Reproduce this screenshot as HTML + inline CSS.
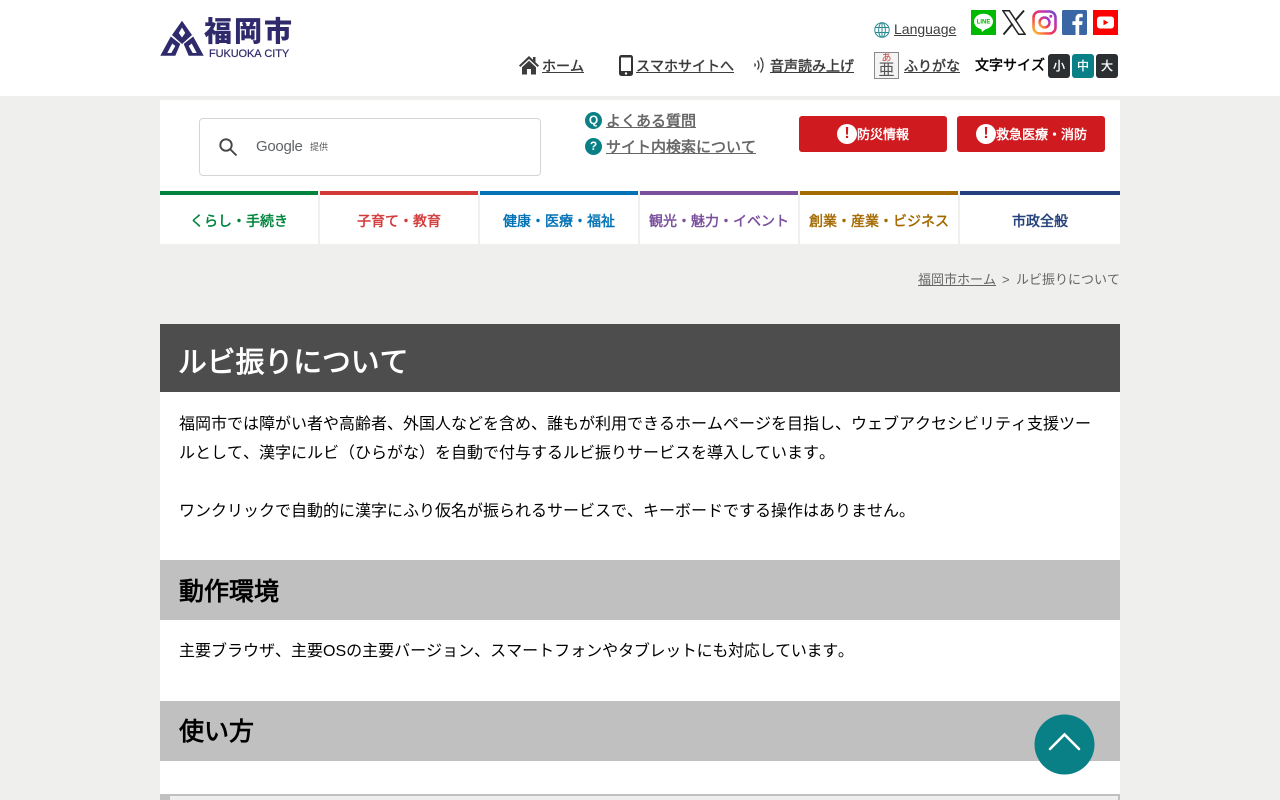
<!DOCTYPE html>
<html lang="ja">
<head>
<meta charset="utf-8">
<title>ルビ振りについて</title>
<style>
html,body{margin:0;padding:0}
body{width:1280px;height:800px;overflow:hidden;position:relative;background:#efefed;font-family:"Liberation Sans","Noto Sans CJK JP",sans-serif;font-kerning:none;color:#000}
.a{position:absolute;white-space:nowrap}
.b{position:absolute}
a{color:inherit}
.hl{font-size:14px;-webkit-text-stroke:.45px;color:#3c3c3c;text-decoration:underline;line-height:20px}
.nav{position:absolute;top:191px;width:158px;height:53px;background:#fff;border-top:4px solid;box-sizing:border-box;text-align:center;font-size:14px;-webkit-text-stroke:.45px;line-height:52px;white-space:nowrap}
.sz{position:absolute;top:54px;width:22px;height:24px;border-radius:3px;background:#2b2f31;color:#fff;font-size:12px;-webkit-text-stroke:.35px;text-align:center;line-height:24px}
.red{position:absolute;top:116px;height:36px;background:#cf1b1f;border-radius:3px;color:#fff;font-size:13px;-webkit-text-stroke:.45px;line-height:38px}
.ex{position:absolute;top:8px;width:20px;height:20px;border-radius:50%;background:#fff;color:#cf1b1f;font-size:16px;font-weight:bold;-webkit-text-stroke:0;line-height:20px;text-align:center}
.q{position:absolute;left:585px;width:17px;height:17px;border-radius:50%;background:#088086;color:#fff;font-size:12px;font-weight:bold;text-align:center;line-height:17px}
.ql{font-size:15px;-webkit-text-stroke:.5px;color:#666;text-decoration:underline;line-height:20px}
</style>
</head>
<body>
<div class="b" style="left:0;top:0;width:1280px;height:96px;background:#fff"></div>

<svg class="b" style="left:160px;top:20px" width="44" height="37" viewBox="0 0 43.400 37">
<path fill="#2e2a6b" fill-rule="evenodd" d="M21.700.7L31.700 15 21.700 24 11.700 15ZM21.700 7.500L18.500 13 21.700 17.500 24.900 13ZM0 35.700L10.500 16.500 20 24 15 35.700ZM7 33H11L15 26 12 23.500ZM43.400 35.700L32.900 16.500 23.400 24 28.400 35.700ZM36.400 33H32.400L28.400 26 31.400 23.500Z"/>
</svg>
<div class="a" style="left:204px;top:11px;font-family:'Noto Sans CJK JP',sans-serif;font-size:28px;font-weight:900;color:#2e2a6b;line-height:38px;letter-spacing:2px">福岡市</div>
<div class="a" style="left:209px;top:47px;font-size:11px;letter-spacing:-.1px;color:#2e2a6b;line-height:14px;-webkit-text-stroke:.2px #2e2a6b">FUKUOKA CITY</div>

<svg class="b" style="left:874px;top:22px" width="16" height="16" viewBox="0 0 16 16" fill="none" stroke="#2b8b92" stroke-width="1"><circle cx="8" cy="8" r="7.200"/><ellipse cx="8" cy="8" rx="3.400" ry="7.200"/><path d="M8 .8V15.200M1 5.500H15M1 10.500H15"/></svg>
<div class="a" style="left:894px;top:19px;font-size:14px;color:#3c3c3c;text-decoration:underline;line-height:20px">Language</div>

<svg class="b" style="left:971px;top:10px" width="25" height="25" viewBox="0 0 25 25"><rect width="25" height="25" fill="#00b900"/><ellipse cx="12.500" cy="11.500" rx="9.500" ry="7.800" fill="#fff"/><path d="M10 18l1 4 5-4z" fill="#fff"/><text x="12.500" y="13.600" font-size="6" font-weight="bold" fill="#00b900" text-anchor="middle" font-family="Liberation Sans">LINE</text></svg>
<svg class="b" style="left:1002px;top:10px" width="24" height="25" viewBox="0 0 24 25"><path d="M1 .8H7.400L23 24.200H16.600Z" fill="#fff" stroke="#222" stroke-width="1.500"/><path d="M22 .5L13.200 10.600M10.600 13.600L1.500 24.500" fill="none" stroke="#222" stroke-width="1.900"/></svg>
<svg class="b" style="left:1032px;top:10px" width="25" height="25" viewBox="0 0 25 25"><defs><linearGradient id="ig" x1="0" y1="1" x2="1" y2="0"><stop offset="0" stop-color="#fdc830"/><stop offset=".4" stop-color="#f0384f"/><stop offset=".75" stop-color="#c22fb0"/><stop offset="1" stop-color="#5b53d8"/></linearGradient></defs><rect x="1.500" y="1.500" width="22" height="22" rx="6" fill="none" stroke="url(#ig)" stroke-width="2.600"/><circle cx="12.500" cy="12.500" r="5" fill="none" stroke="url(#ig)" stroke-width="2.400"/><circle cx="18.800" cy="6.200" r="1.500" fill="#c22fb0"/></svg>
<svg class="b" style="left:1062px;top:10px" width="25" height="25" viewBox="0 0 25 25"><rect width="25" height="25" rx="1.500" fill="#3b66a5"/><path d="M13.500 25V15H10.400V11.200H13.500V8.500C13.500 5.400 15.400 3.800 18.100 3.800C19.400 3.800 20.400 3.900 20.700 4V7.300H18.800C17.300 7.300 17.200 8 17.200 9V11.200H20.600L20.100 15H17.200V25Z" fill="#fff"/></svg>
<svg class="b" style="left:1093px;top:10px" width="25" height="25" viewBox="0 0 25 25"><rect width="25" height="25" fill="#f00"/><rect x="4" y="6.500" width="17" height="12" rx="3" fill="#fff"/><path d="M10.500 9.700L15.500 12.500 10.500 15.300Z" fill="#f00"/></svg>

<svg class="b" style="left:519px;top:55px" width="20" height="20" viewBox="0 0 20 20"><path fill="#3c3c3c" d="M10 1L0 10.500 1.300 12 10 4 18.700 12 20 10.500 16.500 7.200V2H14V4.800ZM10 5.800L3 12.200V19.500H8V14H12V19.500H17V12.200Z"/></svg>
<div class="a hl" style="left:542px;top:56px">ホーム</div>
<svg class="b" style="left:619px;top:55px" width="14" height="21" viewBox="0 0 14 21"><rect width="14" height="21" rx="2.500" fill="#333"/><rect x="2" y="2.500" width="10" height="13.500" fill="#fff"/><circle cx="7" cy="18.500" r="1.200" fill="#fff"/></svg>
<div class="a hl" style="left:636px;top:56px">スマホサイトへ</div>
<svg class="b" style="left:753px;top:56px" width="14" height="18" viewBox="0 0 14 18" fill="none" stroke="#3c3c3c" stroke-width="1.300"><path d="M1.500 7.500Q3 9 1.500 10.500M4.500 4.500Q7.500 9 4.500 13.500M7.500 1.500Q12.500 9 7.500 16.500"/></svg>
<div class="a hl" style="left:770px;top:56px">音声読み上げ</div>

<div class="b" style="left:874px;top:52px;width:23px;height:25px;border:1px solid #8a8a8a;background:#f4f4f4;text-align:center;overflow:hidden">
<div style="font-size:10px;color:#c9403a;line-height:10px;margin-top:1px">あ</div>
<div style="font-size:16px;color:#555;line-height:14px">亜</div>
</div>
<div class="a hl" style="left:904px;top:56px">ふりがな</div>
<div class="a" style="left:975px;top:55px;font-size:14px;-webkit-text-stroke:.45px;line-height:20px">文字サイズ</div>
<div class="sz" style="left:1048px">小</div>
<div class="sz" style="left:1072px;background:#088086">中</div>
<div class="sz" style="left:1096px">大</div>

<div class="b" style="left:160px;top:100px;width:960px;height:91px;background:#fff"></div>
<div class="b" style="left:199px;top:118px;width:340px;height:56px;border:1px solid #d4d4d4;border-radius:4px;background:#fff"></div>
<svg class="b" style="left:218px;top:137px" width="20" height="20" viewBox="0 0 20 20" fill="none" stroke="#444" stroke-width="1.900"><circle cx="8" cy="8" r="5.700"/><path d="M12 12L18.500 18.500"/></svg>
<div class="a" style="left:256px;top:137px;font-size:15px;letter-spacing:-.3px;color:#5f6368;line-height:20px">Google</div>
<div class="a" style="left:310px;top:140px;font-size:9px;color:#555;line-height:14px">提供</div>

<div class="q" style="top:112px">Q</div>
<div class="a ql" style="left:606px;top:112px">よくある質問</div>
<div class="q" style="top:138px">?</div>
<div class="a ql" style="left:606px;top:138px">サイト内検索について</div>

<div class="red" style="left:799px;width:148px"><div class="ex" style="left:38px">!</div><span class="a" style="left:58px">防災情報</span></div>
<div class="red" style="left:957px;width:148px"><div class="ex" style="left:19px">!</div><span class="a" style="left:39px">救急医療・消防</span></div>

<div class="nav" style="left:160px;border-color:#00843d;color:#00843d">くらし・手続き</div>
<div class="nav" style="left:320px;border-color:#d23a3a;color:#d23a3a">子育て・教育</div>
<div class="nav" style="left:480px;border-color:#0072b5;color:#0072b5">健康・医療・福祉</div>
<div class="nav" style="left:640px;border-color:#7a4f9c;color:#7a4f9c">観光・魅力・イベント</div>
<div class="nav" style="left:800px;border-color:#a36a00;color:#a36a00">創業・産業・ビジネス</div>
<div class="nav" style="left:960px;width:160px;border-color:#23407c;color:#23407c">市政全般</div>

<div class="a" style="left:918px;top:270px;font-size:13px;color:#666;line-height:20px;text-decoration:underline">福岡市ホーム</div>
<div class="a" style="left:1002px;top:270px;font-size:13px;color:#666;line-height:20px">&gt;</div>
<div class="a" style="left:1016px;top:270px;font-size:13px;color:#666;line-height:20px">ルビ振りについて</div>

<div class="b" style="left:160px;top:324px;width:960px;height:476px;background:#fff"></div>
<div class="b" style="left:160px;top:324px;width:960px;height:68px;background:#4d4d4d"></div>
<div class="a" style="left:178px;top:341px;font-size:28.800px;-webkit-text-stroke:.85px;color:#fff;line-height:44px">ルビ振りについて</div>

<div class="a" style="left:179px;top:410px;font-size:16px;line-height:29px">福岡市では障がい者や高齢者、外国人などを含め、誰もが利用できるホームページを目指し、ウェブアクセシビリティ支援ツー<br>ルとして、漢字にルビ（ひらがな）を自動で付与するルビ振りサービスを導入しています。<br><br>ワンクリックで自動的に漢字にふり仮名が振られるサービスで、キーボードでする操作はありません。</div>

<div class="b" style="left:160px;top:560px;width:960px;height:60px;background:#c0c0c0"></div>
<div class="a" style="left:179px;top:572px;font-size:25px;-webkit-text-stroke:.8px;line-height:40px">動作環境</div>
<div class="a" style="left:179px;top:637px;font-size:16px;line-height:29px">主要ブラウザ、主要OSの主要バージョン、スマートフォンや<span style="letter-spacing:-.3px">タブレットにも対応しています。</span></div>

<div class="b" style="left:160px;top:701px;width:960px;height:60px;background:#c0c0c0"></div>
<div class="a" style="left:179px;top:712px;font-size:25px;-webkit-text-stroke:.8px;line-height:40px">使い方</div>

<div class="b" style="left:160px;top:794px;width:960px;height:6px;background:#c0c0c0"></div>
<div class="b" style="left:170px;top:796px;width:948px;height:4px;background:#eeeeee"></div>

<svg class="b" style="left:1034px;top:714px" width="61" height="61" viewBox="0 0 61 61"><circle cx="30.500" cy="30.500" r="30" fill="#088086"/><path d="M16 35L30.500 20.500 45 35" fill="none" stroke="#fff" stroke-width="2.600" stroke-linecap="round"/></svg>
</body>
</html>
